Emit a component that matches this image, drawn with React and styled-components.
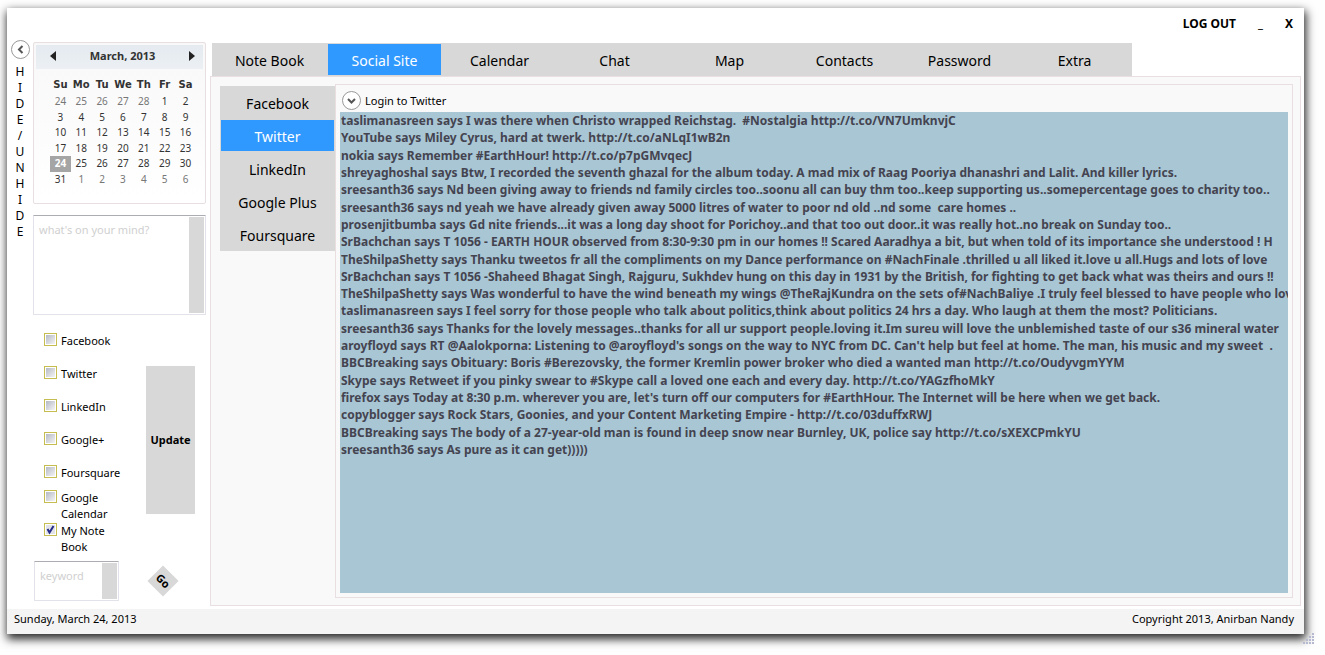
import React, { useState } from "react";
import styled, { createGlobalStyle, css } from "styled-components";

const GlobalStyle = createGlobalStyle`
  *, *::before, *::after { box-sizing: border-box; }
  body {
    margin: 0;
    background: #fefefe;
    color: #000;
    font-family: "Noto Sans", "Open Sans", sans-serif;
    font-size: 11px;
    line-height: 16px;
  }
  button, input, textarea { font: inherit; color: inherit; }
  button { border: 0; padding: 0; background: none; cursor: pointer; }
`;

const Page = styled.div`
  position: relative;
  min-height: 100vh;
  padding: 8px 21px 21px 7px;
`;

const Window = styled.div`
  display: flex;
  flex-direction: column;
  min-height: calc(100vh - 29px);
  background: #fff;
  box-shadow: 1px 4px 9px 1px rgba(0, 0, 0, 0.85);
`;

const TitleBar = styled.header`
  display: flex;
  justify-content: flex-end;
  align-items: center;
  gap: 22px;
  height: 34px;
  padding: 0 11px 2px 0;
`;

const TitleButton = styled.button`
  font-size: 12px;
  font-weight: 700;
`;

const Body = styled.div`
  display: flex;
  flex: 1;
`;

const Rail = styled.div`
  display: flex;
  flex-direction: column;
  align-items: center;
  gap: 5px;
  width: 26px;
  margin-top: -2px;
`;

const RailLetters = styled.div`
  display: flex;
  flex-direction: column;
  align-items: center;
  font-size: 12px;
`;

const RoundButton = styled.button`
  display: flex;
  align-items: center;
  justify-content: center;
  flex: none;
  width: 19px;
  height: 19px;
  border: 1px solid #999;
  border-radius: 50%;
  background: #fff;
`;

const Sidebar = styled.aside`
  display: flex;
  flex-direction: column;
  width: 173px;
`;

const CalendarBox = styled.section`
  height: 162px;
  padding: 2px;
  border: 1px solid #e8dfe1;
  border-radius: 2px;
  background: linear-gradient(#f8f8f8, #fff);
`;

const CalendarHead = styled.div`
  display: flex;
  align-items: center;
  justify-content: space-between;
  height: 24px;
  padding: 0 8px 2px 14px;
  background: linear-gradient(#e4eaf0, #ecf0f4);
  color: #333;
  font-weight: 700;
`;

const ArrowButton = styled.button`
  display: flex;
`;

const Days = styled.table`
  width: 146px;
  height: 113px;
  margin: 5px 0 0 14px;
  border-collapse: collapse;
  table-layout: fixed;
  color: #333;
  font-size: 10px;
  line-height: 15px;
  text-align: center;
  th, td { padding: 0; }
`;

const DayName = styled.th`
  height: 20px;
  font-family: "DejaVu Sans", sans-serif;
  font-weight: 700;
`;

const Day = styled.td`
  height: 15px;
  color: ${(p) => (p.$muted ? "#777" : "#333")};
  ${(p) =>
    p.$selected &&
    css`
      background: #a5a5a5;
      color: #fff;
      font-weight: 700;
    `}
`;

const FieldBox = styled.div`
  display: flex;
  width: ${(p) => p.$width};
  height: ${(p) => p.$height};
  margin: ${(p) => p.$margin || 0};
  padding: 1px;
  border: 1px solid #e2e3ea;
  border-top-color: #abadb3;
  border-radius: 1px;
`;

const Field = styled.textarea`
  flex: 1;
  min-width: 0;
  padding: 5px 4px;
  border: 0;
  outline: 0;
  resize: none;
  overflow: hidden;
  background: transparent;
  &::placeholder { color: #d0d0d0; opacity: 1; }
`;

const ScrollStrip = styled.div`
  width: 15px;
  background: #d8d8d8;
`;

const ShareForm = styled.form`
  display: flex;
  align-items: center;
  justify-content: space-between;
  margin-top: 9px;
  padding: 0 11px;
`;

const Sites = styled.div`
  display: flex;
  flex-direction: column;
  width: 80px;
`;

const SiteLabel = styled.label`
  display: flex;
  align-items: center;
  height: 33px;
`;

const SiteInner = styled.span`
  display: flex;
  align-items: flex-start;
  gap: 4px;
`;

const Check = styled.input`
  appearance: none;
  flex: none;
  width: 13px;
  height: 13px;
  margin: 0;
  border: 1px solid #c5bd4f;
  background: linear-gradient(135deg, #b4b9c4, #f4f4f5) center / 9px 9px no-repeat #fff;
  &:checked {
    background: url("data:image/svg+xml,%3Csvg xmlns='http://www.w3.org/2000/svg' viewBox='0 0 11 11'%3E%3Crect x='1' y='1' width='9' height='9' fill='%23e0e2e8'/%3E%3Cpath d='M2.5 5l2 3.5L8.5 2' fill='none' stroke='%23252b86' stroke-width='2'/%3E%3C/svg%3E") center / 11px 11px no-repeat #fff;
  }
`;

const UpdateButton = styled.button`
  width: 49px;
  height: 148px;
  background: #d8d8d8;
  font-weight: 700;
`;

const SearchForm = styled.form`
  display: flex;
  align-items: center;
  justify-content: space-between;
  margin-top: 6px;
  padding: 0 32px 0 1px;
`;

const GoButton = styled.button`
  width: 22px;
  height: 22px;
  background: #d8d8d8;
  font-weight: 700;
  transform: rotate(45deg);
`;

const Main = styled.main`
  display: flex;
  flex-direction: column;
  flex: 1;
  min-width: 0;
  margin: 1px 3px 3px 4px;
`;

const Tabs = styled.nav`
  display: flex;
  flex-direction: ${(p) => (p.$vertical ? "column" : "row")};
  align-self: flex-start;
  margin: ${(p) => (p.$vertical ? "9px 0 0 9px" : "0 0 0 2px")};
`;

const Tab = styled.button`
  width: 115px;
  height: 33px;
  padding-top: 2px;
  border: 1px solid #d8d8d8;
  background: ${(p) => (p.$active ? "#2f99ff" : "#d8d8d8")};
  color: ${(p) => (p.$active ? "#fff" : "#000")};
  font-size: 14px;
`;

const Panel = styled.section`
  display: flex;
  flex: 1;
  min-width: 0;
  border: 1px solid #e9dfe1;
  background: #f9f9f9;
`;

const Feed = styled.div`
  display: flex;
  flex-direction: column;
  flex: 1;
  min-width: 0;
  margin: 7px 7px 7px 0;
  padding: 6px 4px 4px;
  border: 1px solid #e9dfe1;
`;

const FeedHead = styled.div`
  display: flex;
  align-items: center;
  gap: 4px;
  height: 21px;
  padding: 0 0 2px 2px;
`;

const TweetPane = styled.div`
  flex: 1;
  overflow: hidden;
  background: #a9c6d5;
`;

const TweetList = styled.ul`
  display: grid;
  grid-auto-rows: 1fr;
  align-items: center;
  min-height: 346px;
  margin: 0;
  padding: 0 0 0 1px;
  list-style: none;
`;

const Tweet = styled.li`
  color: #444450;
  font-size: 12px;
  font-weight: 700;
  line-height: 17px;
  white-space: pre;
`;

const Footer = styled.footer`
  display: flex;
  justify-content: space-between;
  height: 25px;
  padding: 2px 10px 0 7px;
  background: #f4f4f4;
`;

const Grip = styled.svg`
  position: absolute;
  right: 10px;
  bottom: 10px;
`;

const weeks = [
  [24, 25, 26, 27, 28, 1, 2],
  [3, 4, 5, 6, 7, 8, 9],
  [10, 11, 12, 13, 14, 15, 16],
  [17, 18, 19, 20, 21, 22, 23],
  [24, 25, 26, 27, 28, 29, 30],
  [31, 1, 2, 3, 4, 5, 6],
];

const isOtherMonth = (week, day) => (week === 0 && day > 7) || (week === 5 && day < 7);

const sites = ["Facebook", "Twitter", "LinkedIn", "Google+", "Foursquare", "Google Calendar", "My Note Book"];
const mainTabs = ["Note Book", "Social Site", "Calendar", "Chat", "Map", "Contacts", "Password", "Extra"];
const socialTabs = ["Facebook", "Twitter", "LinkedIn", "Google Plus", "Foursquare"];

const tweets = [
  "taslimanasreen says I was there when Christo wrapped Reichstag.  #Nostalgia http://t.co/VN7UmknvjC",
  "YouTube says Miley Cyrus, hard at twerk. http://t.co/aNLqI1wB2n",
  "nokia says Remember #EarthHour! http://t.co/p7pGMvqecJ",
  "shreyaghoshal says Btw, I recorded the seventh ghazal for the album today. A mad mix of Raag Pooriya dhanashri and Lalit. And killer lyrics.",
  "sreesanth36 says Nd been giving away to friends nd family circles too..soonu all can buy thm too..keep supporting us..somepercentage goes to charity too..",
  "sreesanth36 says nd yeah we have already given away 5000 litres of water to poor nd old ..nd some  care homes ..",
  "prosenjitbumba says Gd nite friends...it was a long day shoot for Porichoy..and that too out door..it was really hot..no break on Sunday too..",
  "SrBachchan says T 1056 - EARTH HOUR observed from 8:30-9:30 pm in our homes !! Scared Aaradhya a bit, but when told of its importance she understood ! H",
  "TheShilpaShetty says Thanku tweetos fr all the compliments on my Dance performance on #NachFinale .thrilled u all liked it.love u all.Hugs and lots of love",
  "SrBachchan says T 1056 -Shaheed Bhagat Singh, Rajguru, Sukhdev hung on this day in 1931 by the British, for fighting to get back what was theirs and ours !!",
  "TheShilpaShetty says Was wonderful to have the wind beneath my wings @TheRajKundra on the sets of#NachBaliye .I truly feel blessed to have people who love",
  "taslimanasreen says I feel sorry for those people who talk about politics,think about politics 24 hrs a day. Who laugh at them the most? Politicians.",
  "sreesanth36 says Thanks for the lovely messages..thanks for all ur support people.loving it.Im sureu will love the unblemished taste of our s36 mineral water",
  "aroyfloyd says RT @Aalokporna: Listening to @aroyfloyd's songs on the way to NYC from DC. Can't help but feel at home. The man, his music and my sweet  .",
  "BBCBreaking says Obituary: Boris #Berezovsky, the former Kremlin power broker who died a wanted man http://t.co/OudyvgmYYM",
  "Skype says Retweet if you pinky swear to #Skype call a loved one each and every day. http://t.co/YAGzfhoMkY",
  "firefox says Today at 8:30 p.m. wherever you are, let's turn off our computers for #EarthHour. The Internet will be here when we get back.",
  "copyblogger says Rock Stars, Goonies, and your Content Marketing Empire - http://t.co/03duffxRWJ",
  "BBCBreaking says The body of a 27-year-old man is found in deep snow near Burnley, UK, police say http://t.co/sXEXCPmkYU",
  "sreesanth36 says As pure as it can get)))))",
];

function Chevron({ d }) {
  return (
    <svg width="9" height="9" viewBox="0 0 9 9" aria-hidden="true">
      <path d={d} fill="none" stroke="#555" strokeWidth="2" />
    </svg>
  );
}

function Arrow({ points }) {
  return (
    <svg width="7" height="10" viewBox="0 0 7 10" aria-hidden="true">
      <polygon points={points} fill="#222" />
    </svg>
  );
}

export default function App() {
  const [mainTab, setMainTab] = useState("Social Site");
  const [socialTab, setSocialTab] = useState("Twitter");

  return (
    <Page>
      <GlobalStyle />
      <Window>
        <TitleBar>
          <TitleButton>LOG OUT</TitleButton>
          <TitleButton aria-label="Minimize">_</TitleButton>
          <TitleButton aria-label="Close">X</TitleButton>
        </TitleBar>
        <Body>
          <Rail>
            <RoundButton aria-label="Hide sidebar">
              <Chevron d="M6.5 1L3 4.5L6.5 8" />
            </RoundButton>
            <RailLetters>
              {[..."HIDE/UNHIDE"].map((letter, i) => (
                <span key={i}>{letter}</span>
              ))}
            </RailLetters>
          </Rail>
          <Sidebar>
            <CalendarBox>
              <CalendarHead>
                <ArrowButton aria-label="Previous month">
                  <Arrow points="6,0 6,10 0,5" />
                </ArrowButton>
                <span>March, 2013</span>
                <ArrowButton aria-label="Next month">
                  <Arrow points="1,0 1,10 7,5" />
                </ArrowButton>
              </CalendarHead>
              <Days>
                <thead>
                  <tr>
                    {["Su", "Mo", "Tu", "We", "Th", "Fr", "Sa"].map((name) => (
                      <DayName key={name}>{name}</DayName>
                    ))}
                  </tr>
                </thead>
                <tbody>
                  {weeks.map((week, w) => (
                    <tr key={w}>
                      {week.map((day, d) => (
                        <Day key={d} $muted={isOtherMonth(w, day)} $selected={w === 4 && d === 0}>
                          {day}
                        </Day>
                      ))}
                    </tr>
                  ))}
                </tbody>
              </Days>
            </CalendarBox>
            <FieldBox $width="100%" $height="100px" $margin="11px 0 0">
              <Field aria-label="Status" placeholder="what's on your mind?" />
              <ScrollStrip />
            </FieldBox>
            <ShareForm onSubmit={(e) => e.preventDefault()}>
              <Sites>
                {sites.map((site) => (
                  <SiteLabel key={site}>
                    <SiteInner>
                      <Check type="checkbox" defaultChecked={site === "My Note Book"} />
                      <span>{site}</span>
                    </SiteInner>
                  </SiteLabel>
                ))}
              </Sites>
              <UpdateButton>Update</UpdateButton>
            </ShareForm>
            <SearchForm onSubmit={(e) => e.preventDefault()}>
              <FieldBox $width="85px" $height="40px">
                <Field aria-label="Keyword" placeholder="keyword" />
                <ScrollStrip />
              </FieldBox>
              <GoButton>Go</GoButton>
            </SearchForm>
          </Sidebar>
          <Main>
            <Tabs>
              {mainTabs.map((tab) => (
                <Tab key={tab} $active={tab === mainTab} onClick={() => setMainTab(tab)}>
                  {tab}
                </Tab>
              ))}
            </Tabs>
            <Panel>
              <Tabs $vertical>
                {socialTabs.map((tab) => (
                  <Tab key={tab} $active={tab === socialTab} onClick={() => setSocialTab(tab)}>
                    {tab}
                  </Tab>
                ))}
              </Tabs>
              <Feed>
                <FeedHead>
                  <RoundButton aria-label="Expand login">
                    <Chevron d="M1 3L4.5 6.5L8 3" />
                  </RoundButton>
                  <span>Login to Twitter</span>
                </FeedHead>
                <TweetPane>
                  <TweetList>
                    {tweets.map((text) => (
                      <Tweet key={text}>{text}</Tweet>
                    ))}
                  </TweetList>
                </TweetPane>
              </Feed>
            </Panel>
          </Main>
        </Body>
        <Footer>
          <span>Sunday, March 24, 2013</span>
          <span>Copyright 2013, Anirban Nandy</span>
        </Footer>
      </Window>
      <Grip width="12" height="12" viewBox="0 0 12 12" aria-hidden="true">
        {[[9, 0], [6, 3], [9, 3], [3, 6], [6, 6], [9, 6], [0, 9], [3, 9], [6, 9], [9, 9]].map(([x, y]) => (
          <rect key={`${x}-${y}`} x={x} y={y} width="2" height="2" fill="#b5bad0" />
        ))}
      </Grip>
    </Page>
  );
}
